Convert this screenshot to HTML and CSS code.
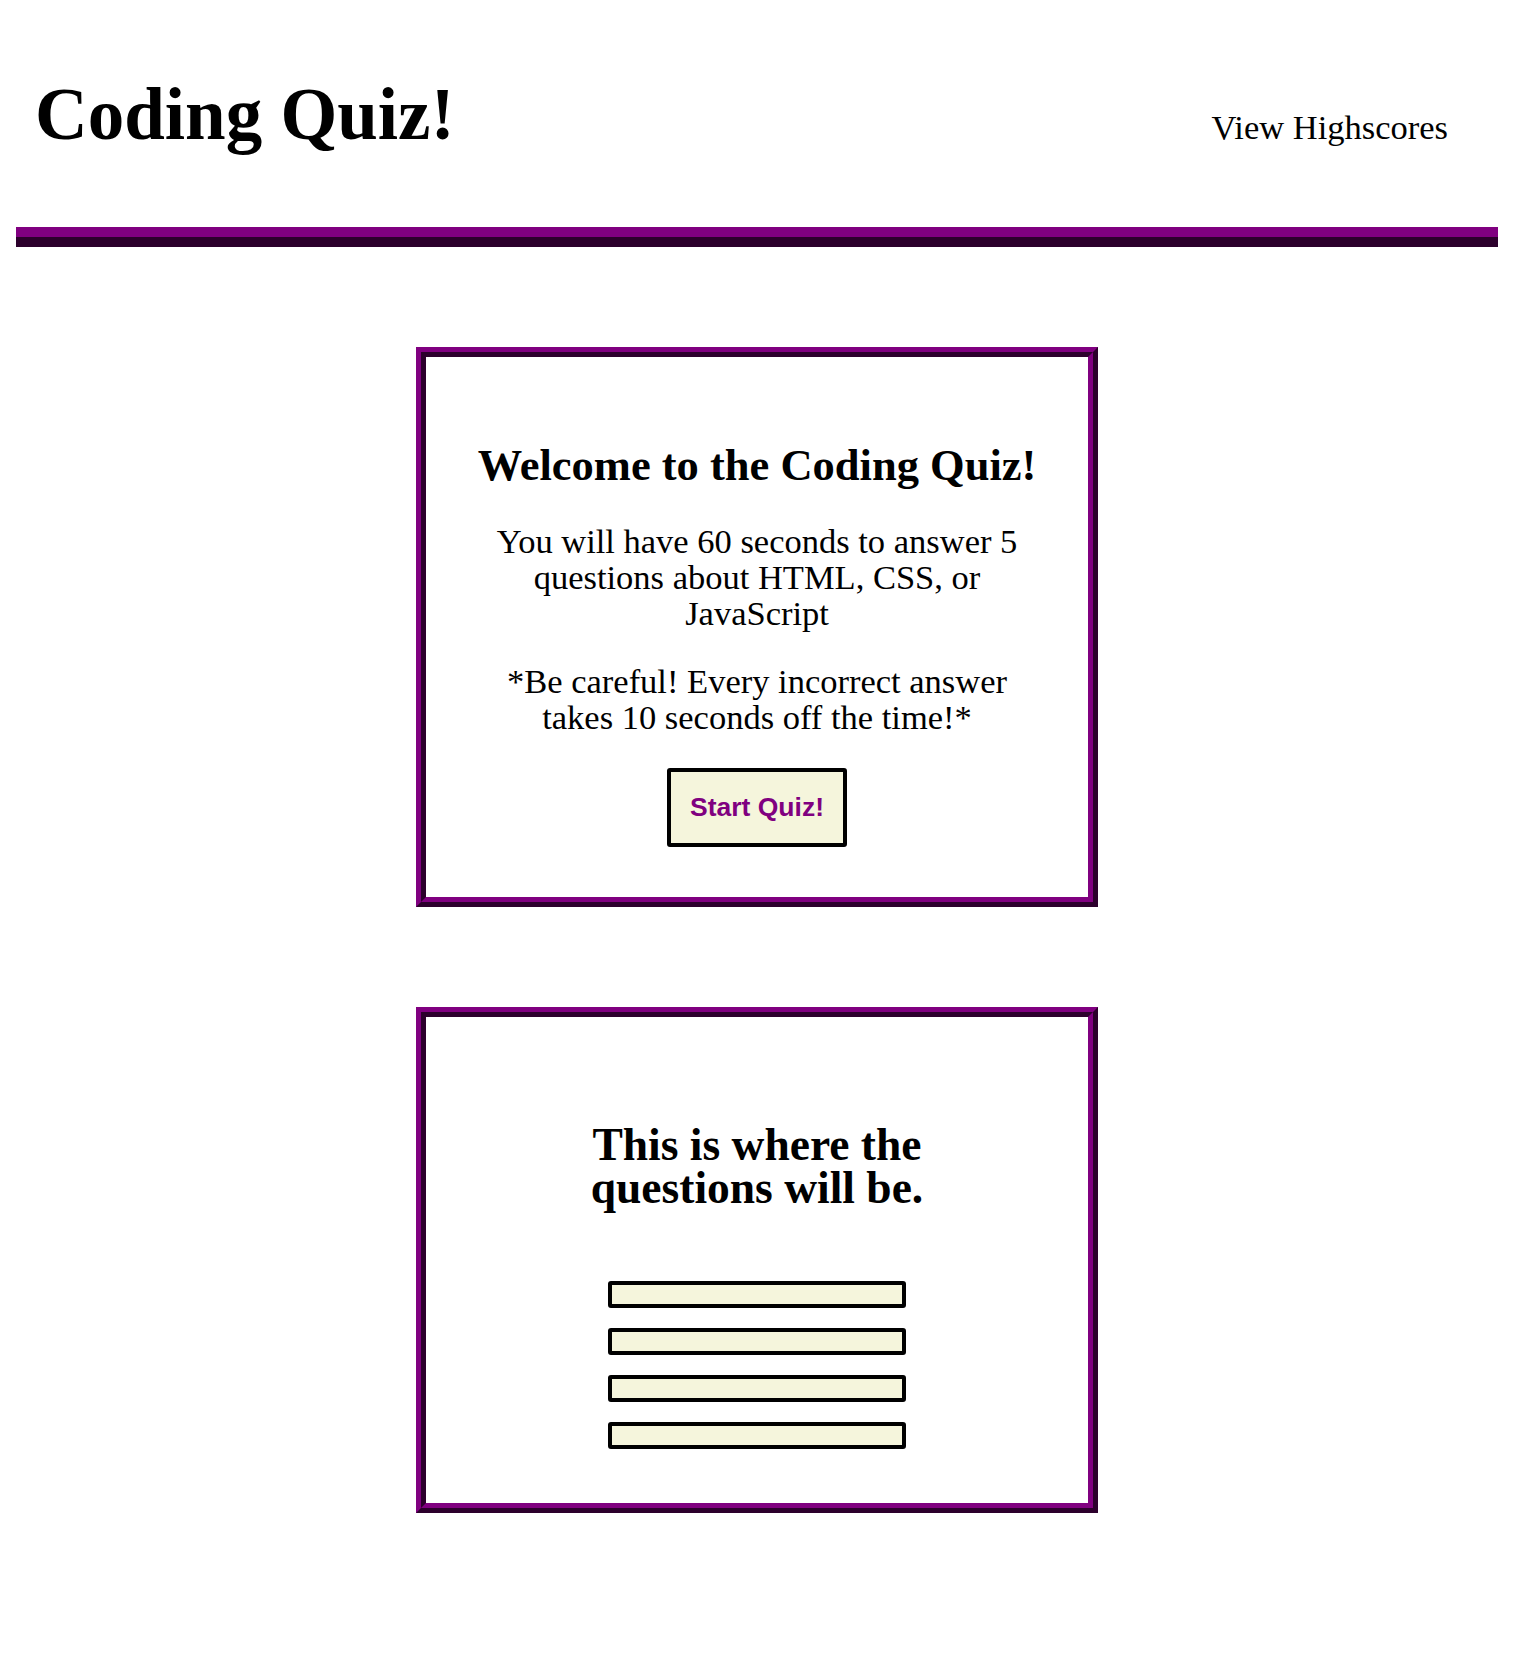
FILE: index.html
```html
<!DOCTYPE html>
<html lang="en">
<head>
<meta charset="utf-8">
<title>Coding Quiz!</title>
<link rel="stylesheet" href="styles.css">
</head>
<body>
<header class="site-header">
  <h1 class="title">Coding Quiz!</h1>
  <a class="highscores" href="#">View Highscores</a>
</header>
<main class="main">
  <section class="card card-intro">
    <h2 class="card-heading">Welcome to the Coding Quiz!</h2>
    <p class="intro-text intro-first">You will have 60 seconds to answer 5 questions about HTML, CSS, or JavaScript</p>
    <p class="intro-text intro-second">*Be careful! Every incorrect answer takes 10 seconds off the time!*</p>
    <button class="start-btn" type="button">Start Quiz!</button>
  </section>
  <section class="card card-question">
    <h2 class="question-heading">This is where the questions will be.</h2>
    <div class="answers">
      <button class="answer" type="button"></button>
      <button class="answer" type="button"></button>
      <button class="answer" type="button"></button>
      <button class="answer" type="button"></button>
    </div>
  </section>
</main>
</body>
</html>
```
FILE: styles.css
```css
body {
  margin: 0;
  background: #fff;
  color: #000;
  font-family: "Liberation Serif", "Times New Roman", serif;
}

.site-header {
  margin: 0 16px;
  padding: 73px 50px 70px 19px;
  display: flex;
  justify-content: space-between;
  align-items: baseline;
  border-bottom: 20px ridge #800080;
}

.title {
  margin: 0;
  font-size: 73px;
  line-height: 84px;
  font-weight: bold;
}

.highscores {
  font-size: 34.5px;
  line-height: 40px;
  color: #000;
  text-decoration: none;
}

.main {
  padding: 100px 0 100px;
  display: flex;
  flex-direction: column;
  align-items: center;
  gap: 100px;
}

.card {
  width: 662px;
  border: 10px ridge #800080;
  display: flex;
  flex-direction: column;
  align-items: center;
  text-align: center;
}

.card-intro {
  padding: 83px 0 50px;
}

.card-heading {
  margin: 0;
  font-size: 44.5px;
  line-height: 50px;
  font-weight: bold;
}

.intro-text {
  width: 550px;
  margin: 0;
  font-size: 34.5px;
  line-height: 36px;
}

.intro-first {
  margin-top: 33px;
}

.intro-second {
  margin-top: 32px;
}

.start-btn {
  margin-top: 33px;
  padding: 20px 19px;
  font-family: "Liberation Sans", Arial, sans-serif;
  font-weight: bold;
  font-size: 26.5px;
  line-height: 31px;
  color: #800080;
  background: #f5f5dc;
  border: 4px solid #000;
  border-radius: 3px;
}

.card-question {
  padding: 106px 0 54px;
}

.question-heading {
  margin: 0;
  max-width: 400px;
  font-size: 45.5px;
  line-height: 43px;
  font-weight: bold;
}

.answers {
  margin-top: 72px;
  display: flex;
  flex-direction: column;
  gap: 20px;
}

.answer {
  display: block;
  width: 298px;
  height: 27px;
  padding: 0;
  box-sizing: border-box;
  background: #f5f5dc;
  border: 4px solid #000;
  border-radius: 3px;
}
```
